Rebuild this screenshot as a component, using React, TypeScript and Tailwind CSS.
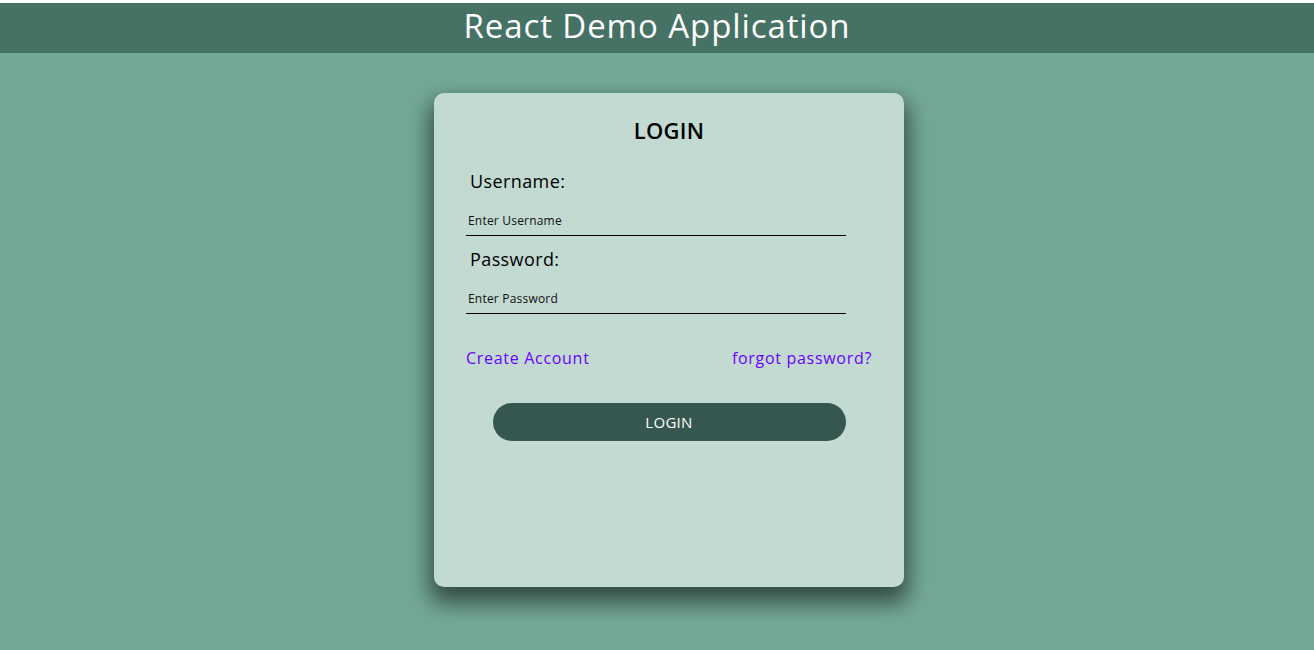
import React from 'react';

const font = { fontFamily: '"Open Sans", "Liberation Sans", sans-serif' };

const Field = ({ label, placeholder, type }: { label: string; placeholder: string; type: string }) => (
  <div className="flex flex-col">
    <label className="pl-1 text-[18px] leading-[27px] tracking-[0.4px] text-black">{label}</label>
    <input
      type={type}
      placeholder={placeholder}
      className="mt-[10px] h-[31px] w-[380px] border-b border-black bg-transparent px-[2px] text-[12px] tracking-[0.2px] text-black outline-none placeholder:text-[#111]"
    />
  </div>
);

export default function App() {
  return (
    <div className="min-h-[650px] bg-white pt-[3px]" style={font}>
      <header className="flex h-[50px] items-center justify-center bg-[#457265] pb-[5px]">
        <h1 className="text-[33px] font-normal leading-none tracking-[0.9px] text-white">React Demo Application</h1>
      </header>
      <main className="flex h-[597px] justify-center bg-[#73a898] pl-[24px] pt-[40px]">
        <div className="flex h-[494px] w-[470px] flex-col rounded-[10px] bg-[#c2dad2] px-8 pt-[21px] shadow-[0_12px_22px_4px_rgba(0,0,0,0.55)]">
          <h2 className="text-center text-[22px] font-semibold leading-[33px] tracking-[0.3px] text-black">LOGIN</h2>
          <div className="mt-[21px] flex flex-col gap-[10px]">
            <Field label="Username:" placeholder="Enter Username" type="text" />
            <Field label="Password:" placeholder="Enter Password" type="password" />
          </div>
          <div className="mt-[32px] flex justify-between text-[16px] leading-[24px] tracking-[0.7px] text-[#6a00ff]">
            <a href="#">Create Account</a>
            <a href="#">forgot password?</a>
          </div>
          <div className="mt-[33px] flex justify-center">
            <button className="h-[38px] w-[353px] rounded-full bg-[#35574f] text-[15px] font-medium tracking-[0.3px] text-white">LOGIN</button>
          </div>
        </div>
      </main>
    </div>
  );
}
